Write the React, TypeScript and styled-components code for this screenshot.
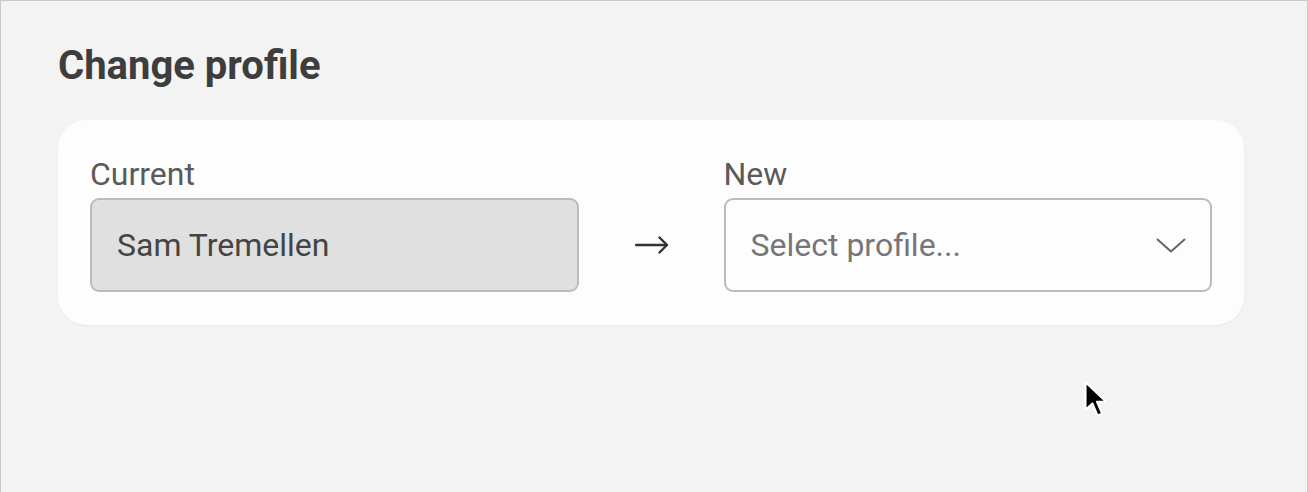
import React from 'react';
import styled, { createGlobalStyle } from 'styled-components';

const GlobalStyle = createGlobalStyle`
  html, body {
    margin: 0;
    padding: 0;
    background: #f3f3f3;
  }
  * {
    box-sizing: border-box;
  }
`;

const Page = styled.div`
  position: relative;
  min-height: 492px;
  padding: 41px 63px 0 57px;
  background: #f3f3f3;
  border: 1px solid #c8c8c8;
  border-bottom: none;
  font-family: Roboto, 'Liberation Sans', sans-serif;
`;

const Title = styled.h1`
  margin: 0 0 30px 0;
  font-size: 40px;
  line-height: 48px;
  font-weight: 700;
  color: #3d3d3d;
`;

const Card = styled.div`
  display: grid;
  grid-template-columns: 1fr 145px 1fr;
  align-items: end;
  padding: 35px 32px 33px 32px;
  background: #fdfdfd;
  border-radius: 28px;
  box-shadow: 0 1px 2px rgba(0, 0, 0, 0.05);
`;

const Field = styled.div`
  display: flex;
  flex-direction: column;
  gap: 5px;
`;

const Label = styled.label`
  font-size: 32px;
  line-height: 38px;
  color: #5a5a5a;
`;

const Box = styled.div<{ $disabled?: boolean }>`
  display: flex;
  align-items: center;
  justify-content: space-between;
  height: 94px;
  padding: 0 24px 0 25px;
  border: 2px solid #bbbbbb;
  border-radius: 9px;
  background: ${(p) => (p.$disabled ? '#e0e0e0' : '#fdfdfd')};
  font-size: 32px;
  color: ${(p) => (p.$disabled ? '#444444' : '#767676')};
`;

const ArrowCell = styled.div`
  display: flex;
  align-items: center;
  justify-content: center;
  height: 94px;
  padding-left: 2px;
`;

const Cursor = styled.svg`
  position: absolute;
  left: 1082px;
  top: 379px;
`;

export default function App() {
  return (
    <>
      <GlobalStyle />
      <Page>
        <Title>Change profile</Title>
        <Card>
          <Field>
            <Label>Current</Label>
            <Box $disabled>Sam Tremellen</Box>
          </Field>
          <ArrowCell>
            <svg width="34" height="18" viewBox="0 0 34 18" fill="none">
              <path d="M1 9H32M24.5 1.5L32 9L24.5 16.5" stroke="#333" strokeWidth="2.4" strokeLinecap="round" strokeLinejoin="round" />
            </svg>
          </ArrowCell>
          <Field>
            <Label>New</Label>
            <Box>
              <span>Select profile...</span>
              <svg width="30" height="15" viewBox="0 0 30 15" fill="none">
                <path d="M1.5 1.5L15 13.5L28.5 1.5" stroke="#666" strokeWidth="2" strokeLinecap="round" strokeLinejoin="round" />
              </svg>
            </Box>
          </Field>
        </Card>
        <Cursor width="28" height="39" viewBox="0 0 24 34">
          <path d="M2 2V26L8 20.5L12.5 31L16.5 29.3L12 19H20Z" fill="#000" stroke="#fff" strokeWidth="1.8" strokeLinejoin="round" />
        </Cursor>
      </Page>
    </>
  );
}
